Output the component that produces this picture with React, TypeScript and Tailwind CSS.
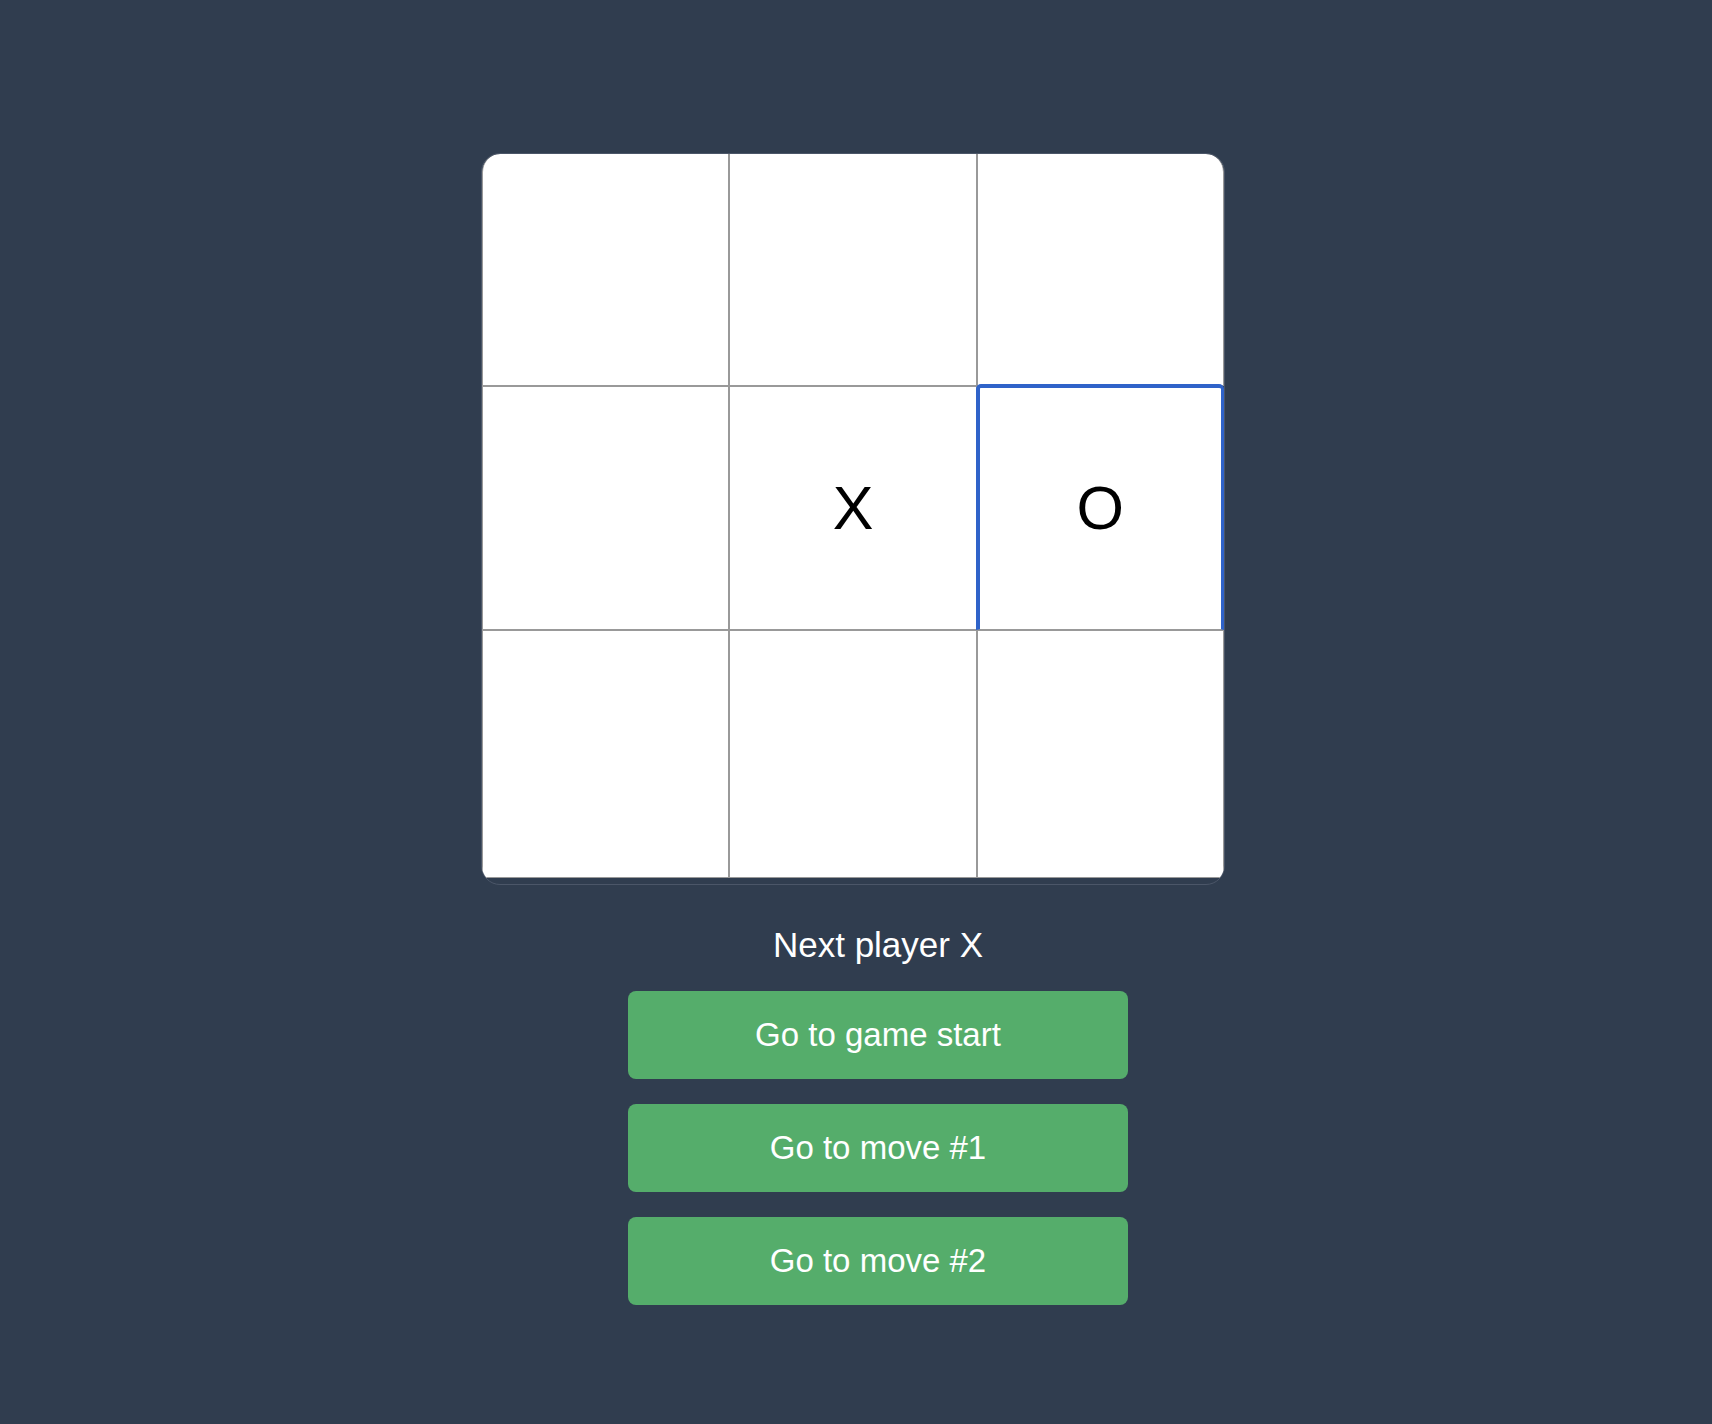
import { useState } from 'react'

type Cell = 'X' | 'O' | null

const FONT = { fontFamily: '"Liberation Sans", Arial, Helvetica, sans-serif' }

function cellClass(i: number, focused: number) {
    if (i === focused) {
        return 'border-l-[4px] border-t-[4px] border-r-[3px] border-b border-[#2f63c9] border-b-[#999999] rounded-t-[5px] -mt-[2px] -ml-[1px]'
    }
    if (i === 0) return 'border border-t-0 border-[#999999] rounded-tl-[18px]'
    if (i === 1) return 'border border-t-0 border-[#999999]'
    if (i === 2) return 'border border-t-0 border-[#999999] rounded-tr-[18px]'
    return 'border border-[#999999]'
}

export default function App() {
    const [history, setHistory] = useState<Cell[][]>([
        Array(9).fill(null),
        [null, null, null, null, 'X', null, null, null, null],
        [null, null, null, null, 'X', 'O', null, null, null],
    ])
    const [step, setStep] = useState(2)
    const squares = history[step]
    const xNext = step % 2 === 0
    const focused = 5

    const handleClick = (i: number) => {
        if (squares[i]) return
        const next = squares.slice()
        next[i] = xNext ? 'X' : 'O'
        setHistory([...history.slice(0, step + 1), next])
        setStep(step + 1)
    }

    return (
        <div className="min-h-screen w-full bg-[#303d4f] pt-[153px]" style={FONT}>
            {/* board */}
            <div className="ml-[481px] w-[744px] h-[732px] rounded-[19px] border border-[#4b5668] overflow-hidden">
                <div className="grid grid-cols-3 grid-rows-[232px_244px_248px]">
                    {squares.map((v, i) => (
                        <button
                            key={i}
                            onClick={() => handleClick(i)}
                            className={`flex items-center justify-center bg-white text-black text-[61px] leading-none font-normal outline-none ${cellClass(i, focused)}`}
                        >
                            {v}
                        </button>
                    ))}
                </div>
            </div>

            {/* status + history */}
            <div className="ml-[628px] w-[500px] mt-[40px] flex flex-col">
                <div className="h-[40px] flex items-center justify-center text-white text-[35px]">
                    Next player {xNext ? 'X' : 'O'}
                </div>
                <div className="mt-[26px] flex flex-col gap-[25px]">
                    {history.map((_, move) => (
                        <button
                            key={move}
                            onClick={() => setStep(move)}
                            className="h-[88px] w-full rounded-lg bg-[#55ad6b] text-white text-[33px] flex items-center justify-center"
                        >
                            {move > 0 ? `Go to move #${move}` : 'Go to game start'}
                        </button>
                    ))}
                </div>
            </div>
        </div>
    )
}
